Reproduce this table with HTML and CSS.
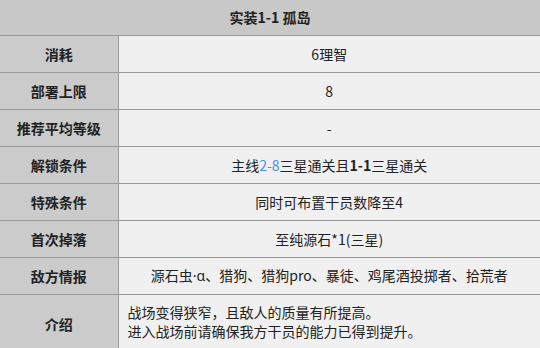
FILE: index.html
```html
<!DOCTYPE html>
<html lang="zh-CN">
<head>
<meta charset="utf-8">
<title>实装1-1 孤岛</title>
<link rel="stylesheet" href="styles.css">
</head>
<body>
<table class="info">
  <colgroup><col class="col-label"><col class="col-value"></colgroup>
  <tr class="head-row"><th colspan="2" class="title">实装1-1 孤岛</th></tr>
  <tr><th class="label">消耗</th><td class="value">6理智</td></tr>
  <tr><th class="label">部署上限</th><td class="value">8</td></tr>
  <tr><th class="label">推荐平均等级</th><td class="value">-</td></tr>
  <tr><th class="label">解锁条件</th><td class="value">主线<span class="link">2-8</span>三星通关且<b>1-1</b>三星通关</td></tr>
  <tr><th class="label">特殊条件</th><td class="value">同时可布置干员数降至4</td></tr>
  <tr><th class="label">首次掉落</th><td class="value">至纯源石*1(三星)</td></tr>
  <tr><th class="label">敌方情报</th><td class="value">源石虫<span class="latin">·α</span>、猎狗、猎狗pro、暴徒、鸡尾酒投掷者、拾荒者</td></tr>
  <tr class="intro-row"><th class="label">介绍</th><td class="value intro">战场变得狭窄，且敌人的质量有所提高。<br>进入战场前请确保我方干员的能力已得到提升。</td></tr>
</table>
</body>
</html>
```
FILE: styles.css
```css
html, body {
  margin: 0;
  padding: 0;
  background: #f0f0f0;
}
body {
  font-family: "Noto Sans CJK SC", "Noto Sans", sans-serif;
  font-size: 14px;
  line-height: 20px;
  color: #222;
}
.info {
  width: 540px;
  border-collapse: collapse;
  border-style: hidden;
  table-layout: fixed;
}
.col-label {
  width: 118px;
}
.info th, .info td {
  border: 1px solid #9a9a9a;
  padding: 0 4px;
  white-space: nowrap;
}
.title {
  height: 35px;
  box-sizing: border-box;
  background: #c8c8c8;
  font-weight: bold;
  text-align: center;
}
.label {
  height: 37px;
  box-sizing: border-box;
  background: #cbcbcb;
  font-weight: bold;
  text-align: center;
}
.value {
  background: #f0f0f0;
  text-align: center;
}
.latin {
  font-family: "Noto Sans", "Noto Sans CJK SC", sans-serif;
}
.link {
  color: #4a8ff0;
}
.info .intro {
  text-align: left;
  padding: 8px 8px 12px 9px;
  line-height: 19px;
}
.intro-row .label {
  height: 60px;
}
```
